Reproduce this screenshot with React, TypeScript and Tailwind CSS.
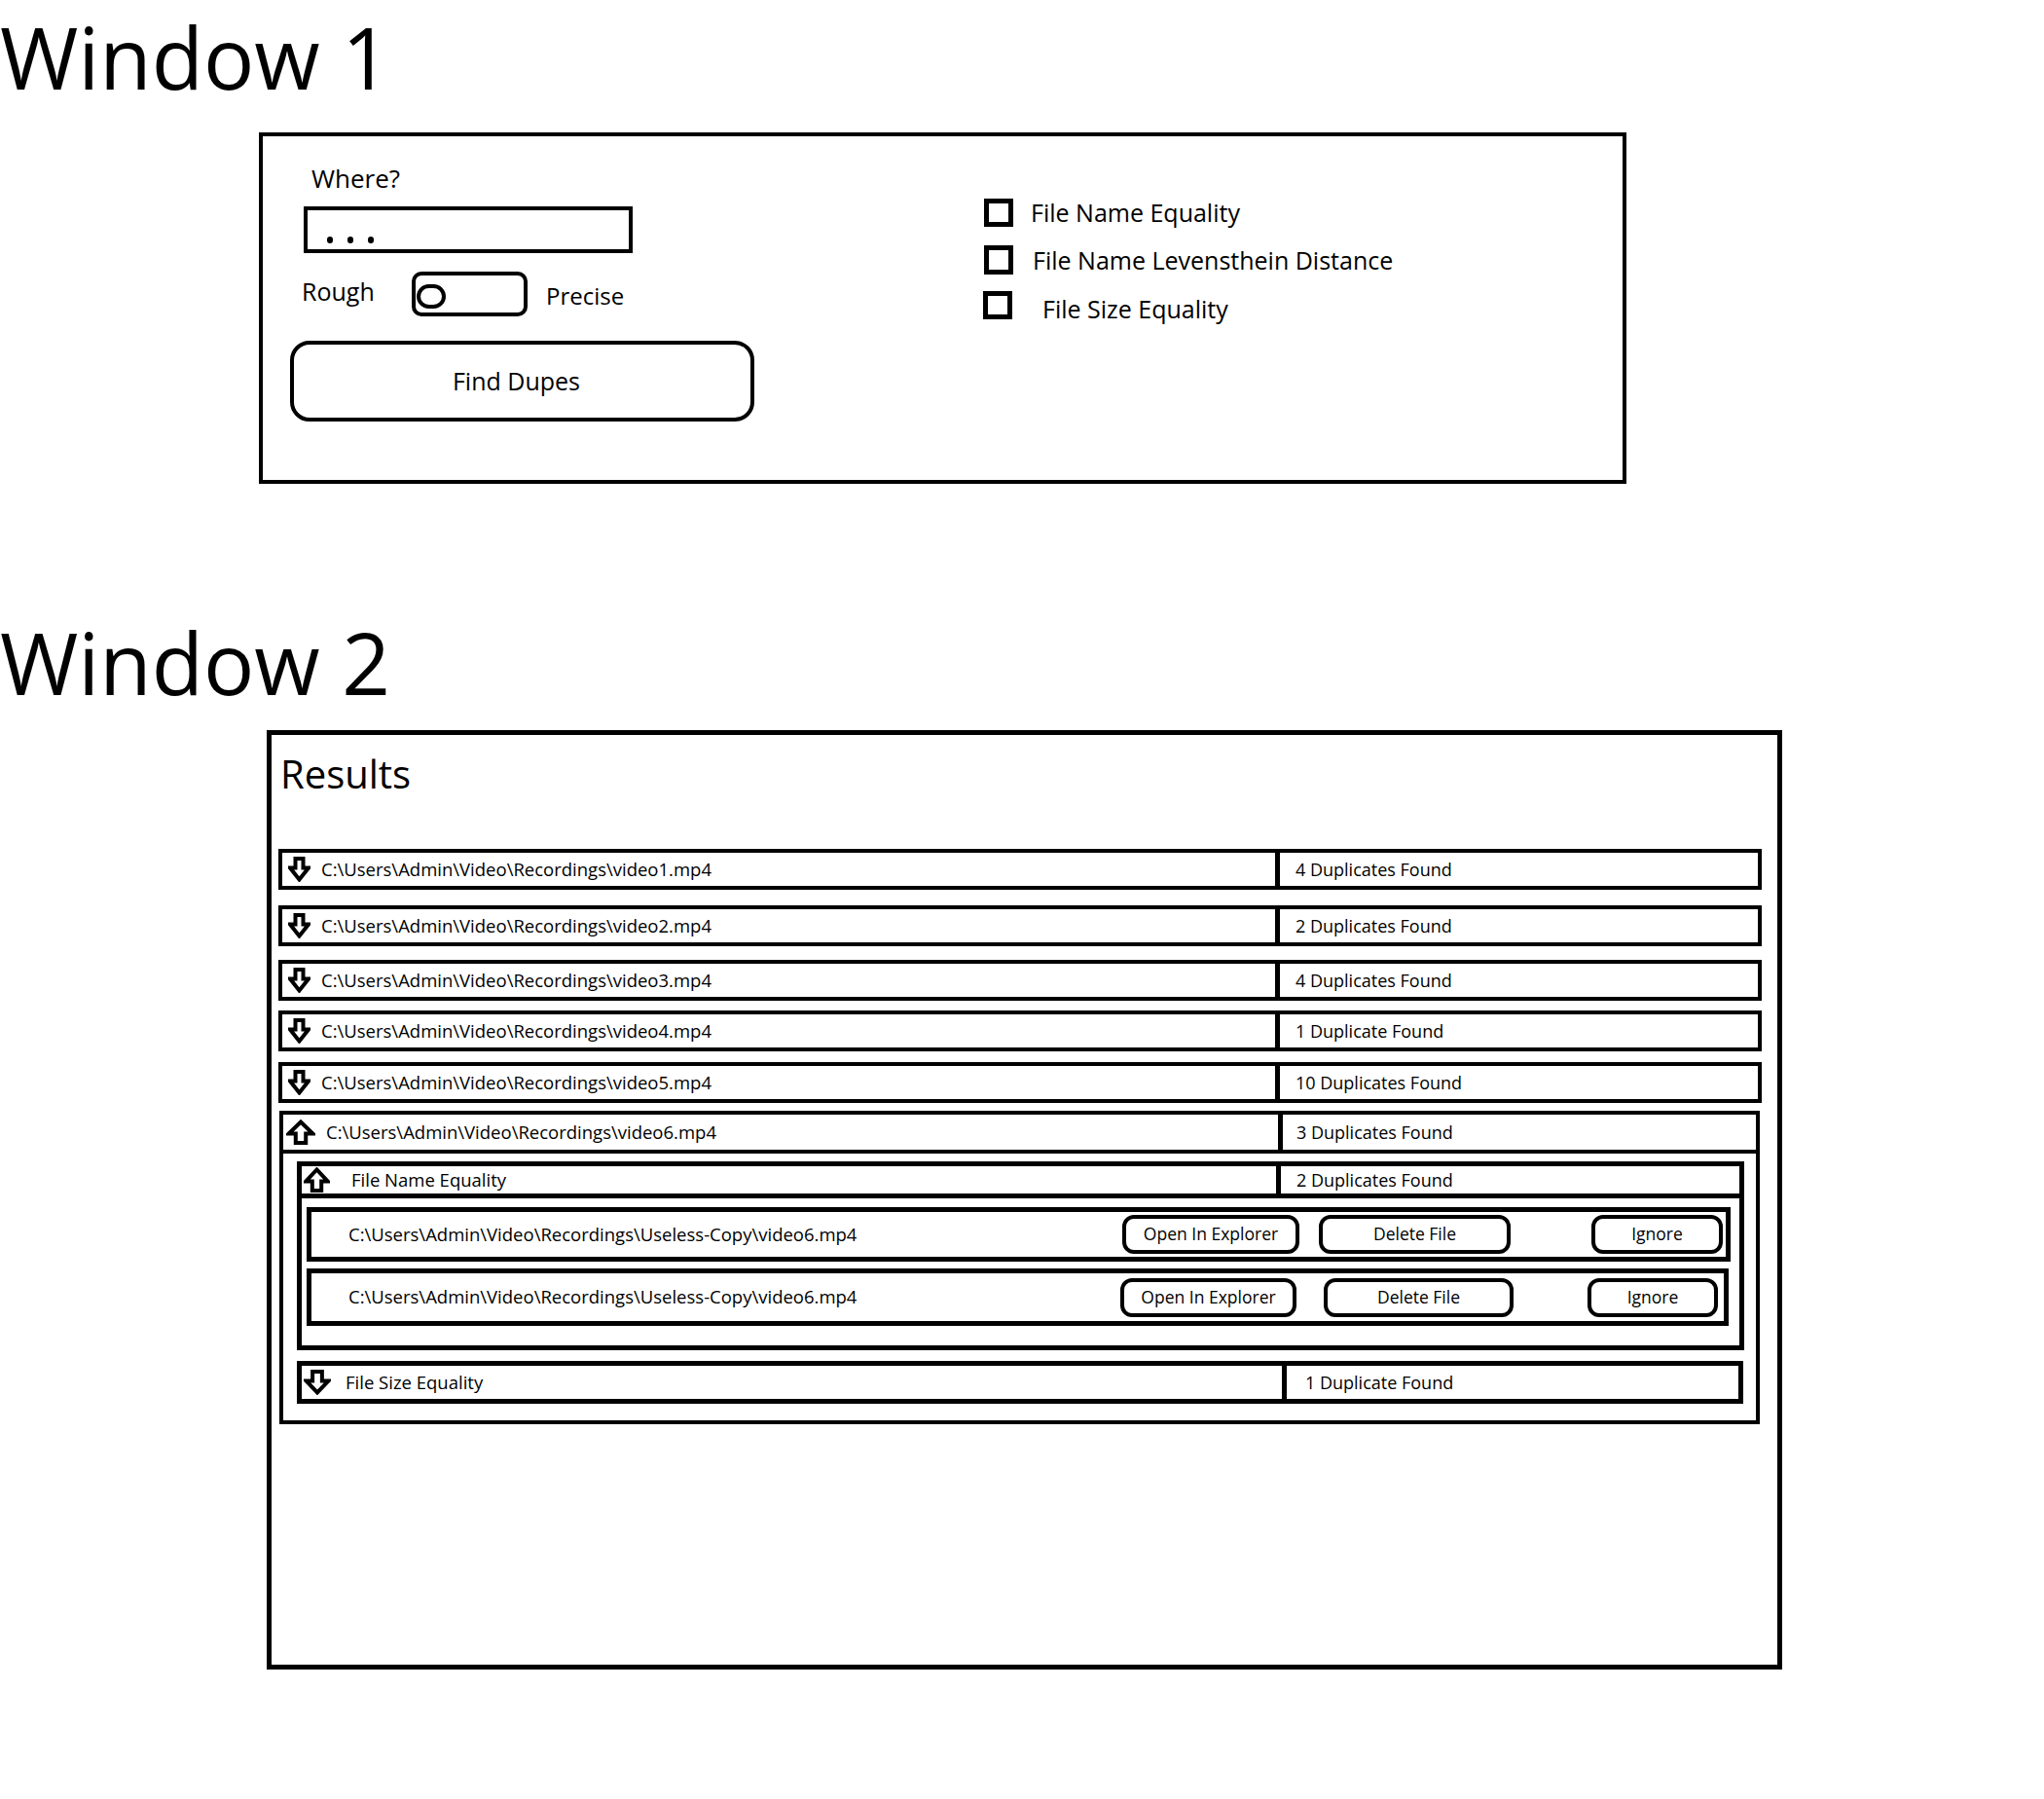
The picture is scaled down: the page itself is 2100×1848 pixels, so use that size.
import React from 'react'

type Dir = 'up' | 'down'

function Arrow({ dir, w = 23, className = '' }: { dir: Dir; w?: number; className?: string }) {
  const d =
    dir === 'down'
      ? 'M7.5 2H15.5V11.5H21L11.5 23.5L2 11.5H7.5Z'
      : 'M7.5 24H15.5V14.5H21L11.5 2.5L2 14.5H7.5Z'
  return (
    <svg width={w} height={26} viewBox="0 0 23 26" preserveAspectRatio="none" className={`shrink-0 ${className}`}>
      <path d={d} fill="white" stroke="black" strokeWidth={4} vectorEffect="non-scaling-stroke" />
    </svg>
  )
}

const results = [
  { file: 'C:\\Users\\Admin\\Video\\Recordings\\video1.mp4', count: '4 Duplicates Found', gap: 'mt-[57px]' },
  { file: 'C:\\Users\\Admin\\Video\\Recordings\\video2.mp4', count: '2 Duplicates Found', gap: 'mt-[16px]' },
  { file: 'C:\\Users\\Admin\\Video\\Recordings\\video3.mp4', count: '4 Duplicates Found', gap: 'mt-[14px]' },
  { file: 'C:\\Users\\Admin\\Video\\Recordings\\video4.mp4', count: '1 Duplicate Found', gap: 'mt-[10px]' },
  { file: 'C:\\Users\\Admin\\Video\\Recordings\\video5.mp4', count: '10 Duplicates Found', gap: 'mt-[11px]' },
]

function ResultRow({ file, count, gap }: { file: string; count: string; gap: string }) {
  return (
    <div className={`ml-[7px] flex h-[42px] w-[1524px] border-4 border-black ${gap}`}>
      <div className="flex w-[1025px] items-center border-r-[5px] border-black pl-[6px]">
        <Arrow dir="down" />
        <span className="ml-[11px] text-[18.5px] leading-none">{file}</span>
      </div>
      <div className="flex flex-1 items-center pl-[16px] text-[18px] leading-none">{count}</div>
    </div>
  )
}

function Pill({ label, className }: { label: string; className: string }) {
  return (
    <div className={`flex h-[40px] items-center justify-center rounded-[12px] border-4 border-black text-[17.5px] leading-none ${className}`}>
      {label}
    </div>
  )
}

function DupeItem({ file, className, btn }: { file: string; className: string; btn: string[] }) {
  return (
    <div className={`ml-[5px] flex items-center border-[5px] border-black pl-[38px] ${className}`}>
      <span className="text-[18.5px] leading-none">{file}</span>
      <div className="ml-auto flex items-center">
        <Pill label="Open In Explorer" className={btn[0]} />
        <Pill label="Delete File" className={btn[1]} />
        <Pill label="Ignore" className={btn[2]} />
      </div>
    </div>
  )
}

export default function App() {
  const copy = 'C:\\Users\\Admin\\Video\\Recordings\\Useless-Copy\\video6.mp4'
  return (
    <div className="min-h-[1848px] w-[2100px] bg-white font-['Open_Sans',sans-serif] text-black">
      <h1 className="mt-[15px] inline-block text-[87px] leading-none">Window 1</h1>

      {/* Window 1 - search options */}
      <div className="ml-[266px] mt-[34px] flex h-[361px] w-[1405px] border-4 border-black">
        <div className="flex w-[740px] flex-col">
          <span className="ml-[50px] mt-[30px] text-[26px] leading-none">Where?</span>
          <div className="ml-[42px] mt-[16px] flex h-[48px] w-[338px] items-end gap-[15px] border-4 border-black pb-[6px] pl-[20px]">
            <span className="h-[7px] w-[6px] rounded-full bg-black" />
            <span className="h-[7px] w-[6px] rounded-full bg-black" />
            <span className="h-[7px] w-[6px] rounded-full bg-black" />
          </div>
          <div className="mt-[19px] flex items-start">
            <span className="ml-[40px] mt-[8px] w-[113px] text-[25px] leading-none">Rough</span>
            <div className="flex h-[46px] w-[119px] items-center rounded-[10px] border-4 border-black pl-[1px]">
              <span className="mt-[4px] h-[25px] w-[30px] rounded-full border-4 border-black" />
            </div>
            <span className="ml-[19px] mt-[13px] text-[24px] leading-none">Precise</span>
          </div>
          <button className="ml-[28px] mt-[25px] flex h-[83px] w-[477px] items-center justify-center rounded-[20px] border-4 border-black pr-[12px] text-[25px] leading-none">
            Find Dupes
          </button>
        </div>

        <div className="flex flex-col pt-[64px]">
          <label className="flex items-center">
            <span className="ml-[1px] h-[29px] w-[30px] border-[5px] border-black" />
            <span className="ml-[18px] text-[25px] leading-none">File Name Equality</span>
          </label>
          <label className="mt-[19px] flex items-center">
            <span className="ml-[1px] h-[30px] w-[30px] border-[5px] border-black" />
            <span className="ml-[20px] text-[25px] leading-none">File Name Levensthein Distance</span>
          </label>
          <label className="mt-[15px] flex items-center">
            <span className="h-[29px] w-[30px] border-[5px] border-black" />
            <span className="ml-[31px] pt-[8px] text-[25px] leading-none">File Size Equality</span>
          </label>
        </div>
      </div>

      <h1 className="mt-[140px] block text-[87px] leading-none">Window 2</h1>

      {/* Window 2 - results */}
      <div className="ml-[274px] mt-[26px] flex h-[965px] w-[1557px] flex-col border-[5px] border-black">
        <span className="ml-[9px] mt-[20px] text-[40px] leading-none">Results</span>

        {results.map((r) => (
          <ResultRow key={r.file} {...r} />
        ))}

        {/* expanded row */}
        <div className="ml-[8px] mt-[8px] flex h-[322px] w-[1521px] flex-col border-4 border-black">
          <div className="flex h-[40px] shrink-0 border-b-4 border-black">
            <div className="flex w-[1027px] items-center border-r-[5px] border-black pl-[3px]">
              <Arrow dir="up" w={30} />
              <span className="ml-[11px] text-[18.5px] leading-none">C:\Users\Admin\Video\Recordings\video6.mp4</span>
            </div>
            <div className="flex flex-1 items-center pl-[14px] text-[18px] leading-none">3 Duplicates Found</div>
          </div>

          <div className="ml-[14px] mt-[8px] flex h-[194px] w-[1487px] flex-col border-[5px] border-black">
            <div className="flex h-[33px] shrink-0 border-b-[5px] border-black">
              <div className="flex w-[1006px] items-center border-r-[5px] border-black pl-[2px]">
                <Arrow dir="up" w={27} />
                <span className="ml-[22px] text-[18.5px] leading-none">File Name Equality</span>
              </div>
              <div className="flex flex-1 items-center pl-[16px] text-[18px] leading-none">2 Duplicates Found</div>
            </div>
            <DupeItem
              file={copy}
              className="mt-[9px] h-[56px] w-[1463px] pr-[3px]"
              btn={['w-[182px]', 'ml-[20px] w-[197px]', 'ml-[83px] w-[135px]']}
            />
            <DupeItem
              file={copy}
              className="mt-[7px] h-[59px] w-[1461px] pr-[6px]"
              btn={['w-[181px]', 'ml-[28px] w-[195px]', 'ml-[76px] w-[134px]']}
            />
          </div>

          <div className="ml-[14px] mt-[11px] flex h-[44px] w-[1486px] border-[5px] border-black">
            <div className="flex w-[1012px] items-center border-r-[5px] border-black pl-[2px]">
              <Arrow dir="down" w={28} />
              <span className="ml-[15px] text-[18.5px] leading-none">File Size Equality</span>
            </div>
            <div className="flex flex-1 items-center pl-[19px] text-[18px] leading-none">1 Duplicate Found</div>
          </div>
        </div>
      </div>
    </div>
  )
}
